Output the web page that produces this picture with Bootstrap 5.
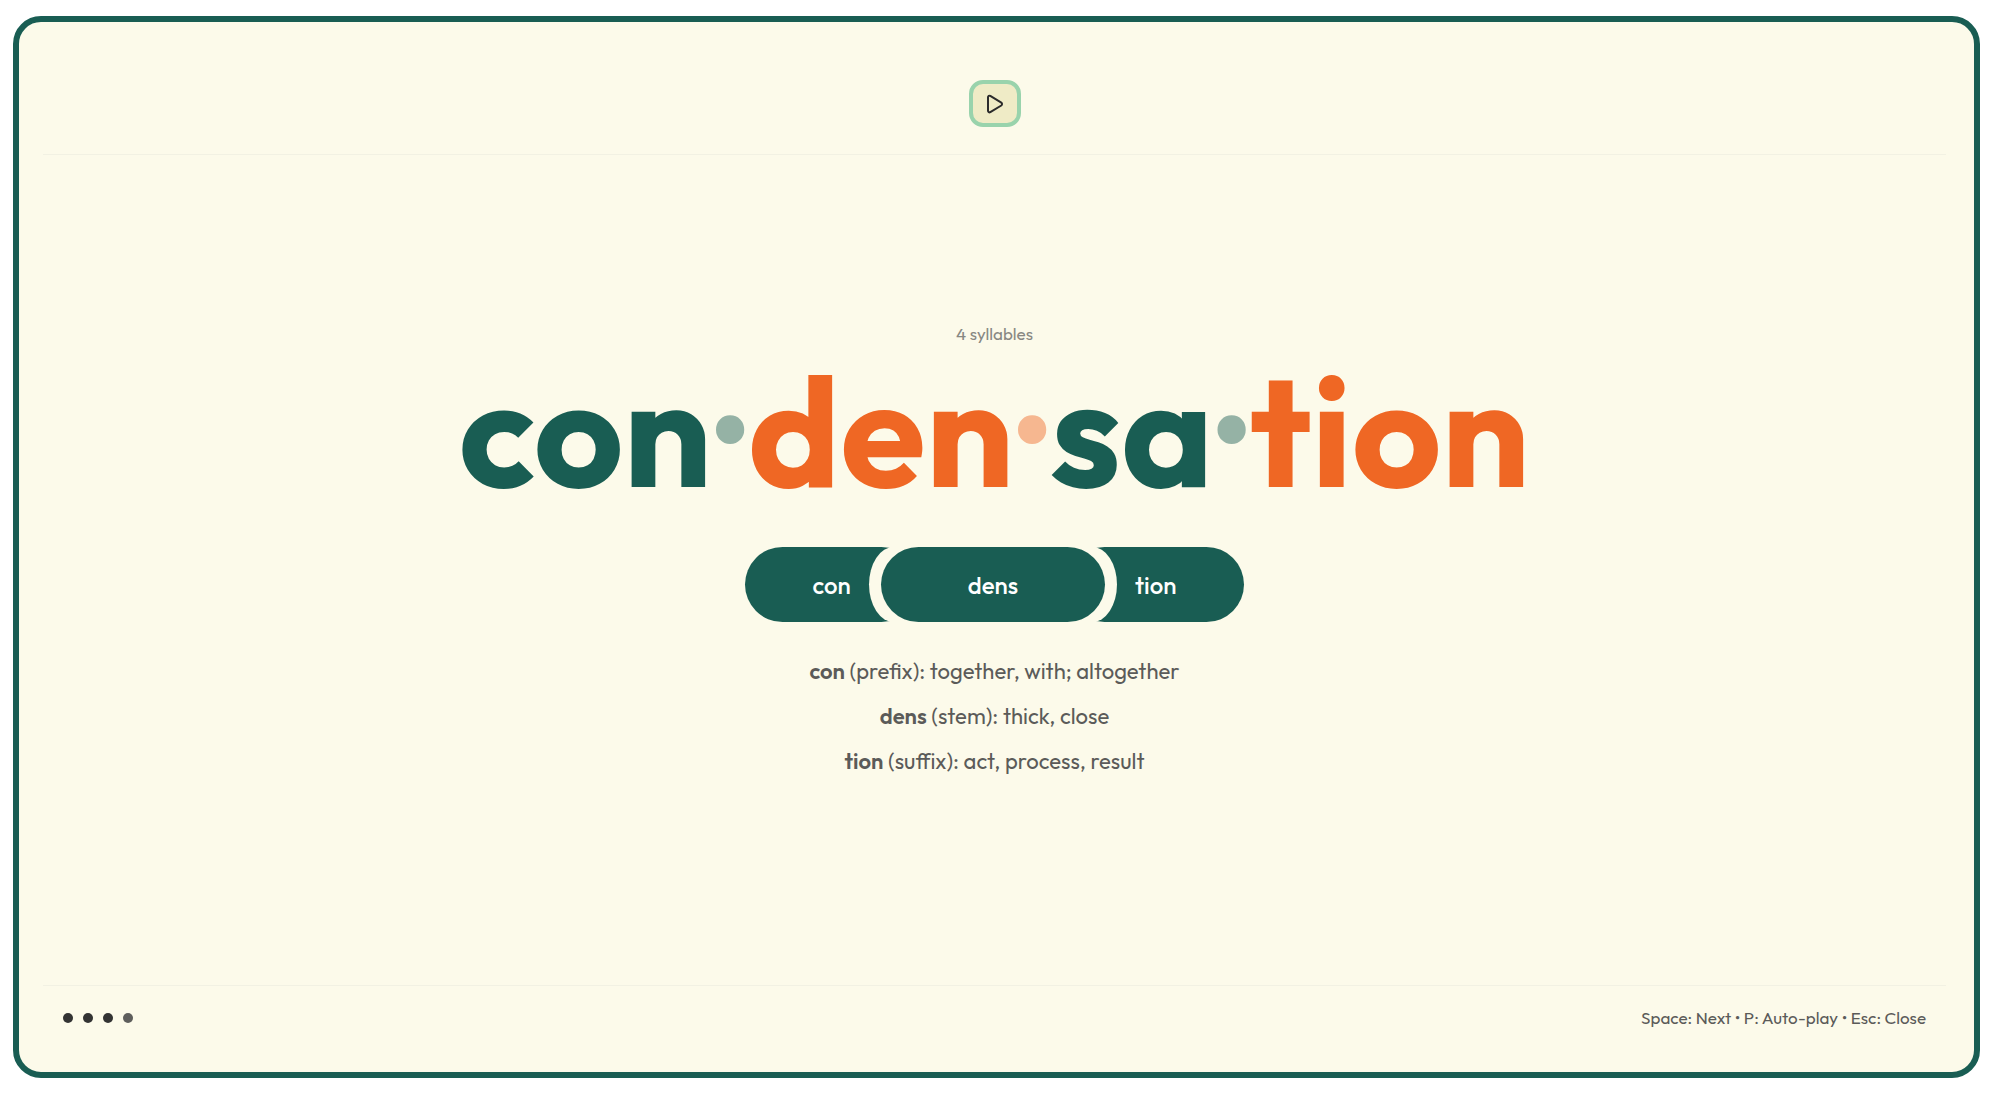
<!DOCTYPE html>
<html lang="en">
<head>
<meta charset="utf-8">
<meta name="viewport" content="width=device-width, initial-scale=1">
<title>Condensation – syllables</title>
<link href="https://cdn.jsdelivr.net/npm/bootstrap@5.3.0/dist/css/bootstrap.min.css" rel="stylesheet">
<style>
  :root { --cream: #fcfaea; --pine: #195d53; --flame: #ef6724; }
  body { font-family: Outfit, Lato, sans-serif; background: #fff; color: #5b5b59; }
  .stage { padding: 16px 20px 15px 13px; }
  .slide-frame { background: var(--cream); border: 6px solid var(--pine); border-radius: 28px; padding: 0 28px 0 24px; }
  .top-bar { padding: 58px 0 27px; border-bottom: 1px solid #f2f1e3; }
  .play-btn { width: 52px; height: 47px; padding: 0; border: 4px solid #99d3ac; border-radius: 14px; background: #efebc6; color: #2b2b2b; }
  .play-btn:hover { background: #e8e3b6; border-color: #99d3ac; }
  .word-area { padding-bottom: 34px; }
  .count-label { font-size: 17px; line-height: 24px; color: #888883; margin-bottom: 4px; }
  .word-line { font-size: 155px; line-height: 160px; font-weight: 700; margin-bottom: 37px; }
  .tone-a { color: var(--pine); }
  .tone-b { color: var(--flame); }
  .syl-dot { opacity: .45; margin: 0 4px; }
  .morph { background: var(--pine); color: #fff; font-size: 24px; font-weight: 500; line-height: 73px; padding-top: 2px; border-radius: 38px; }
  .morph-side { padding-left: 68px; padding-right: 68px; }
  .morph-stem { padding-left: 87px; padding-right: 87px; }
  .stem-ring { background: var(--cream); border-radius: 25px / 38px; padding: 0 12px; margin: 0 -50px; z-index: 1; }
  .meanings { font-size: 22px; line-height: 45px; margin-top: 27px; }
  .meanings b { font-weight: 600; }
  .bottom-bar { padding: 16px 20px 38px; border-top: 1px solid #f2f1e3; font-size: 17px; line-height: 32px; }
  .step-list { gap: 10px; }
  .step-dot { width: 10px; height: 10px; background: #333; }
  .step-now { background: #5e5e5c; }
</style>
</head>
<body>
<div class="stage vh-100 d-flex">
  <main class="slide-frame flex-fill d-flex flex-column">
    <header class="top-bar d-flex justify-content-center">
      <button type="button" class="btn play-btn d-flex align-items-center justify-content-center" aria-label="Auto-play">
        <svg width="18" height="20" viewBox="0 0 18 20" fill="none" stroke="currentColor" stroke-width="2" stroke-linejoin="round"><path d="M2 3.200v13.600c0 1.200 1.200 1.900 2.300 1.400l11-6.700c1-.7 1-2.200 0-2.900l-11-6.700C3.200 1.300 2 2 2 3.200z"/></svg>
      </button>
    </header>
    <section class="word-area flex-fill d-flex flex-column align-items-center justify-content-center">
      <p class="count-label">4 syllables</p>
      <h1 class="word-line d-flex"><span class="tone-a">con</span><span class="tone-a syl-dot">·</span><span class="tone-b">den</span><span class="tone-b syl-dot">·</span><span class="tone-a">sa</span><span class="tone-a syl-dot">·</span><span class="tone-b">tion</span></h1>
      <div class="d-flex">
        <div class="morph morph-side">con</div>
        <div class="stem-ring position-relative"><div class="morph morph-stem">dens</div></div>
        <div class="morph morph-side">tion</div>
      </div>
      <div class="meanings text-center">
        <div><b>con</b> (prefix): together, with; altogether</div>
        <div><b>dens</b> (stem): thick, close</div>
        <div><b>tion</b> (suffix): act, process, result</div>
      </div>
    </section>
    <footer class="bottom-bar d-flex justify-content-between align-items-center">
      <div class="step-list d-flex">
        <span class="step-dot rounded-circle"></span><span class="step-dot rounded-circle"></span><span class="step-dot rounded-circle"></span><span class="step-dot step-now rounded-circle"></span>
      </div>
      <div>Space: Next • P: Auto-play • Esc: Close</div>
    </footer>
  </main>
</div>
<script src="https://cdn.jsdelivr.net/npm/bootstrap@5.3.0/dist/js/bootstrap.bundle.min.js"></script>
</body>
</html>
